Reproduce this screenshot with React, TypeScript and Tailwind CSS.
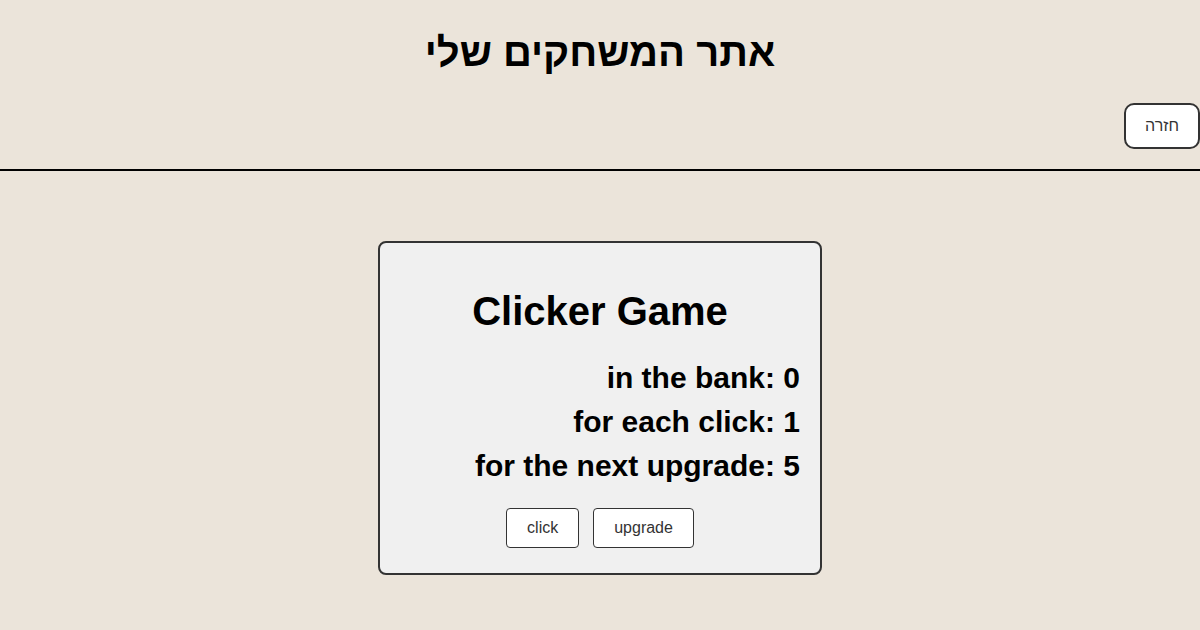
import React, { useState } from 'react';

const App: React.FC = () => {
  const [bank, setBank] = useState(0);
  const [perClick, setPerClick] = useState(1);
  const [upgradeCost, setUpgradeCost] = useState(5);

  const upgrade = () => {
    if (bank < upgradeCost) return;
    setBank(bank - upgradeCost);
    setPerClick(perClick + 1);
    setUpgradeCost(upgradeCost * 2);
  };

  return (
    <div
      dir="rtl"
      className="min-h-screen bg-[#ebe4da] text-black font-['Liberation_Sans','DejaVu_Sans',sans-serif]"
    >
      {/* Header */}
      <header className="border-b-2 border-black pt-[29px] pb-[20px]">
        <h1 className="text-center text-[40px] font-bold leading-[46px]">אתר המשחקים שלי</h1>
        <div className="mt-[28px] flex">
          <button className="h-[46px] w-[76px] rounded-[10px] border-2 border-[#333] bg-white text-[16px] text-[#333]">
            חזרה
          </button>
        </div>
      </header>

      {/* Game card */}
      <main className="pt-[70px] flex justify-center">
        <div className="w-[444px] h-[334px] rounded-lg border-2 border-[#333] bg-[#f0f0f0] px-5 pt-[45px]">
          <h2 className="text-center text-[40px] font-bold leading-[46px]">Clicker Game</h2>
          <div className="mt-[22px] text-[30px] font-bold leading-[44px]">
            <p>in the bank: {bank}</p>
            <p>for each click: {perClick}</p>
            <p>for the next upgrade: {upgradeCost}</p>
          </div>
          <div dir="ltr" className="mt-[20px] flex justify-center gap-[14px]">
            <button
              onClick={() => setBank(bank + perClick)}
              className="h-10 px-5 rounded border border-[#333] bg-white text-[16px] text-[#333]"
            >
              click
            </button>
            <button
              onClick={upgrade}
              className="h-10 px-5 rounded border border-[#333] bg-white text-[16px] text-[#333]"
            >
              upgrade
            </button>
          </div>
        </div>
      </main>
    </div>
  );
};

export default App;
